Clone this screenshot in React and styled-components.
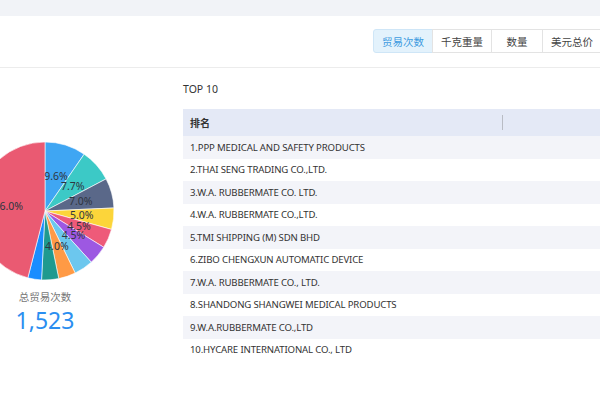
import React from "react";
import styled, { createGlobalStyle } from "styled-components";

const Global = createGlobalStyle`
  html, body { margin: 0; padding: 0; background: #fff; }
  body { font-family: "Noto Sans", "Noto Sans CJK SC", sans-serif; overflow: hidden; width: 600px; height: 400px; }
`;

const Page = styled.div`
  width: 600px;
  height: 400px;
  overflow: hidden;
  background: #fff;
`;

const TopBand = styled.div`
  height: 16px;
  background: #f1f3f7;
`;

const Toolbar = styled.div`
  height: 52px;
  box-sizing: border-box;
  padding: 13px 0 0 374px;
  display: flex;
  align-items: flex-start;
  border-bottom: 1px solid #ececec;
`;

const TabButton = styled.div`
  flex: none;
  height: 24px;
  min-width: 52px;
  box-sizing: border-box;
  padding: 0 8px;
  display: flex;
  align-items: center;
  justify-content: center;
  font-family: "Noto Sans CJK SC", sans-serif;
  font-size: 10.5px;
  color: ${(p) => (p.$active ? "#3d9be0" : "#444")};
  background: ${(p) => (p.$active ? "#e3f2fc" : "#fff")};
  border: 1px solid ${(p) => (p.$active ? "#cfe6f7" : "#e3e3e3")};
  margin-left: -1px;
  border-radius: ${(p) => (p.$first ? "3px 0 0 3px" : "0")};
`;

const Content = styled.div`
  display: flex;
  align-items: flex-start;
`;

const ChartCol = styled.div`
  flex: none;
  width: 90px;
  display: flex;
  flex-direction: column;
  align-items: center;
  padding-top: 73px;
`;

const PieSvg = styled.svg`
  display: block;
  overflow: visible;
`;

const TotalLabel = styled.div`
  margin-top: 9px;
  font-family: "Noto Sans CJK SC", sans-serif;
  font-size: 10.5px;
  line-height: 14px;
  color: #777;
`;

const TotalValue = styled.div`
  margin-top: 3px;
  font-family: "Noto Sans", sans-serif;
  font-size: 23px;
  line-height: 27px;
  color: #2b8ef0;
`;

const TableCol = styled.div`
  flex: none;
  margin-left: 93px;
  padding-top: 13px;
  width: 520px;
`;

const Title = styled.div`
  font-size: 10.5px;
  line-height: 16px;
  color: #333;
  margin-bottom: 12px;
`;

const HeaderRow = styled.div`
  height: 27px;
  background: #e4e9f6;
  display: flex;
  align-items: center;
`;

const HeaderCell = styled.div`
  font-family: "Noto Sans CJK SC", sans-serif;
  font-weight: 700;
  font-size: 10px;
  color: #333;
  padding-left: 7px;
  width: 319px;
  box-sizing: border-box;
`;

const HeaderSep = styled.div`
  width: 1px;
  height: 15px;
  background: #b9bcc4;
`;

const Row = styled.div`
  height: 22.5px;
  display: flex;
  align-items: center;
  padding-left: 7px;
  background: ${(p) => (p.$striped ? "#f3f4f9" : "#fff")};
  font-size: 9.6px;
  color: #333;
  letter-spacing: -0.15px;
  white-space: nowrap;
`;

const slices = [
  { v: 9.6, c: "#3fa6f3", label: true },
  { v: 7.7, c: "#3cc9c6", label: true },
  { v: 7.0, c: "#5a6889", label: true },
  { v: 5.0, c: "#fcd53a", label: true },
  { v: 4.5, c: "#ee5a79", label: true },
  { v: 4.5, c: "#9d58e2", label: true },
  { v: 4.5, c: "#6cc7ee", label: false },
  { v: 4.0, c: "#ff9a45", label: true },
  { v: 4.0, c: "#1f9a8f", label: false },
  { v: 3.2, c: "#1a8dff", label: false },
  { v: 46.0, c: "#ea5a72", label: true },
];

const R = 69;

function pt(frac, r) {
  const a = frac * Math.PI * 2;
  return [r * Math.sin(a), -r * Math.cos(a)];
}

function Pie() {
  let acc = 0;
  const parts = slices.map((s, i) => {
    const start = acc / 100;
    acc += s.v;
    const end = acc / 100;
    const [x1, y1] = pt(start, R);
    const [x2, y2] = pt(end, R);
    const large = end - start > 0.5 ? 1 : 0;
    const d = `M0 0 L${x1} ${y1} A${R} ${R} 0 ${large} 1 ${x2} ${y2} Z`;
    const [lx, ly] = pt((start + end) / 2, 37);
    return { d, c: s.c, lx, ly, show: s.label, text: s.v.toFixed(1) + "%", key: i };
  });
  return (
    <PieSvg width="90" height="140" viewBox="-45 -70 90 140">
      {parts.map((p) => (
        <path key={p.key} d={p.d} fill={p.c} stroke="#fff" strokeWidth="0.6" />
      ))}
      {parts
        .filter((p) => p.show)
        .map((p) => (
          <text
            key={"t" + p.key}
            x={p.lx}
            y={p.ly}
            textAnchor="middle"
            dominantBaseline="central"
            fontSize="10.5"
            fontFamily="Noto Sans, sans-serif"
            fill="#2f3540"
          >
            {p.text}
          </text>
        ))}
    </PieSvg>
  );
}

const rows = [
  "1.PPP MEDICAL AND SAFETY PRODUCTS",
  "2.THAI SENG TRADING CO.,LTD.",
  "3.W.A. RUBBERMATE CO. LTD.",
  "4.W.A. RUBBERMATE CO.,LTD.",
  "5.TMI SHIPPING (M) SDN BHD",
  "6.ZIBO CHENGXUN AUTOMATIC DEVICE",
  "7.W.A. RUBBERMATE CO., LTD.",
  "8.SHANDONG SHANGWEI MEDICAL PRODUCTS",
  "9.W.A.RUBBERMATE CO.,LTD",
  "10.HYCARE INTERNATIONAL CO., LTD",
];

const tabs = ["贸易次数", "千克重量", "数量", "美元总价"];

export default function App() {
  return (
    <Page>
      <Global />
      <TopBand />
      <Toolbar>
        {tabs.map((t, i) => (
          <TabButton key={t} $active={i === 0} $first={i === 0}>
            {t}
          </TabButton>
        ))}
      </Toolbar>
      <Content>
        <ChartCol>
          <Pie />
          <TotalLabel>总贸易次数</TotalLabel>
          <TotalValue>1,523</TotalValue>
        </ChartCol>
        <TableCol>
          <Title>TOP 10</Title>
          <HeaderRow>
            <HeaderCell>排名</HeaderCell>
            <HeaderSep />
          </HeaderRow>
          {rows.map((r, i) => (
            <Row key={r} $striped={i % 2 === 0}>
              {r}
            </Row>
          ))}
        </TableCol>
      </Content>
    </Page>
  );
}
